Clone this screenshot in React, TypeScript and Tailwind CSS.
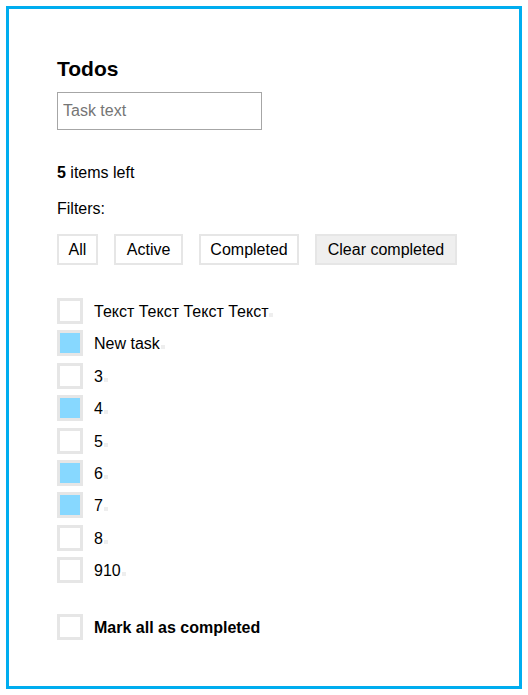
import React from 'react'

const todos = [
  { text: 'Текст Текст Текст Текст', done: false },
  { text: 'New task', done: true },
  { text: '3', done: false },
  { text: '4', done: true },
  { text: '5', done: false },
  { text: '6', done: true },
  { text: '7', done: true },
  { text: '8', done: false },
  { text: '910', done: false },
]

function Box({ checked }: { checked: boolean }) {
  return (
    <span
      className={
        'w-[26px] h-[26px] shrink-0 border-[3px] border-[#e6e6e6] ' +
        (checked ? 'bg-[#87d8ff]' : 'bg-white')
      }
    />
  )
}

export default function App() {
  return (
    <div className="p-[6px] bg-white" style={{ fontFamily: '"Liberation Sans", Arial, sans-serif' }}>
      <div className="h-[683px] border-[3px] border-[#00adef] pt-[48px] pl-[48px] text-black">
        <h1 className="text-[21px] leading-[23px] font-bold">Todos</h1>
        <input
          placeholder="Task text"
          className="mt-[12px] w-[205px] h-[38px] border border-[#a6a6a6] px-[5px] text-[16px] outline-none placeholder:text-[#757575]"
        />

        <p className="mt-[34px] text-[16px] leading-[18px]">
          <b>5</b> items left
        </p>
        <p className="mt-[18px] text-[16px] leading-[18px]">Filters:</p>

        {/* Filters */}
        <div className="mt-[16px] flex gap-[16.5px]">
          <button className="h-[31px] px-[9.5px] border-2 border-[#e6e6e6] bg-white text-[16px] leading-[18px]">
            All
          </button>
          <button className="h-[31px] px-[10.5px] border-2 border-[#e6e6e6] bg-white text-[16px] leading-[18px]">
            Active
          </button>
          <button className="h-[31px] px-[9px] border-2 border-[#e6e6e6] bg-white text-[16px] leading-[18px]">
            Completed
          </button>
          <button className="h-[31px] px-[10.5px] border-2 border-[#e6e6e6] bg-[#efefef] text-[16px] leading-[18px]">
            Clear completed
          </button>
        </div>

        {/* List */}
        <ul className="mt-[33px] flex flex-col gap-[6.4px]">
          {todos.map((t, i) => (
            <li key={i} className="flex items-center gap-[11px] text-[16px] leading-[18px]">
              <Box checked={t.done} />
              <span className="pt-[2px]">
                {t.text}
                <span className="inline-block w-[4px] h-[4px] bg-[#eeeeee] ml-[1px]" />
              </span>
            </li>
          ))}
        </ul>

        <label className="mt-[31px] flex items-center gap-[11px] text-[16px] font-bold leading-[18px]">
          <Box checked={false} />
          <span className="pt-[2px]">Mark all as completed</span>
        </label>
      </div>
    </div>
  )
}
